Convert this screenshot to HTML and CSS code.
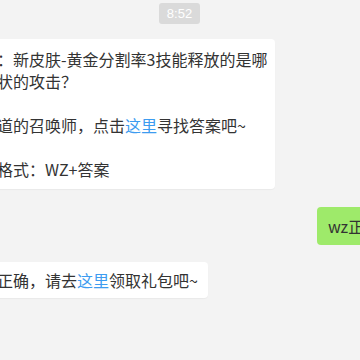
FILE: index.html
```html
<!DOCTYPE html>
<html lang="zh-CN">
<head>
  <meta charset="UTF-8">
  <meta name="viewport" content="width=device-width, initial-scale=1.0">
  <title>聊天</title>
  <link rel="stylesheet" href="styles.css">
</head>
<body>
  <div class="chat">
    <div class="time">8:52</div>

    <div class="row row-left first">
      <div class="bubble bubble-white">
        ：新皮肤-黄金分割率3技能释放的是哪<br>
        状的攻击？<br>
        <br>
        道的召唤师，点击<a href="#">这里</a>寻找答案吧~<br>
        <br>
        格式：WZ+答案
      </div>
    </div>

    <div class="row row-right">
      <div class="bubble bubble-green">wz正确答案</div>
    </div>

    <div class="row row-left">
      <div class="bubble bubble-white">正确，请去<a href="#">这里</a>领取礼包吧~</div>
    </div>
  </div>
</body>
</html>
```

FILE: styles.css
```css
html, body {
  margin: 0;
  padding: 0;
  background: #f3f3f3;
  overflow: hidden;
}

body {
  font-family: "Noto Sans CJK SC", "Noto Sans", sans-serif;
  color: #333;
  width: 360px;
  height: 360px;
}

.chat {
  display: flex;
  flex-direction: column;
  padding-top: 3px;
}

.time {
  align-self: center;
  margin-left: -1px;
  width: 41px;
  height: 21px;
  line-height: 21px;
  text-align: center;
  background: #dadada;
  color: #fff;
  font-family: "Liberation Sans", Arial, sans-serif;
  font-size: 13px;
  border-radius: 3px;
}

.row {
  display: flex;
  margin-top: 17px;
}

.row.first {
  margin-top: 15px;
}

.row-left {
  margin-left: -14px;
}

.row-right {
  padding-left: 317px;
  margin-top: 18px;
}

.bubble {
  font-size: 16px;
  line-height: 22px;
  border-radius: 4px;
  white-space: nowrap;
}

.bubble-white {
  background: #fff;
  padding: 7px 10px 7px 11px;
  box-shadow: 0 1px 1px rgba(0, 0, 0, 0.04);
}

.row.first .bubble-white {
  padding-top: 9px;
  padding-bottom: 9px;
  width: 268px;
}

.bubble-green {
  background: #9eea6a;
  padding: 8px 11px;
}

.bubble a {
  color: #3d9cf0;
  text-decoration: none;
}
```
